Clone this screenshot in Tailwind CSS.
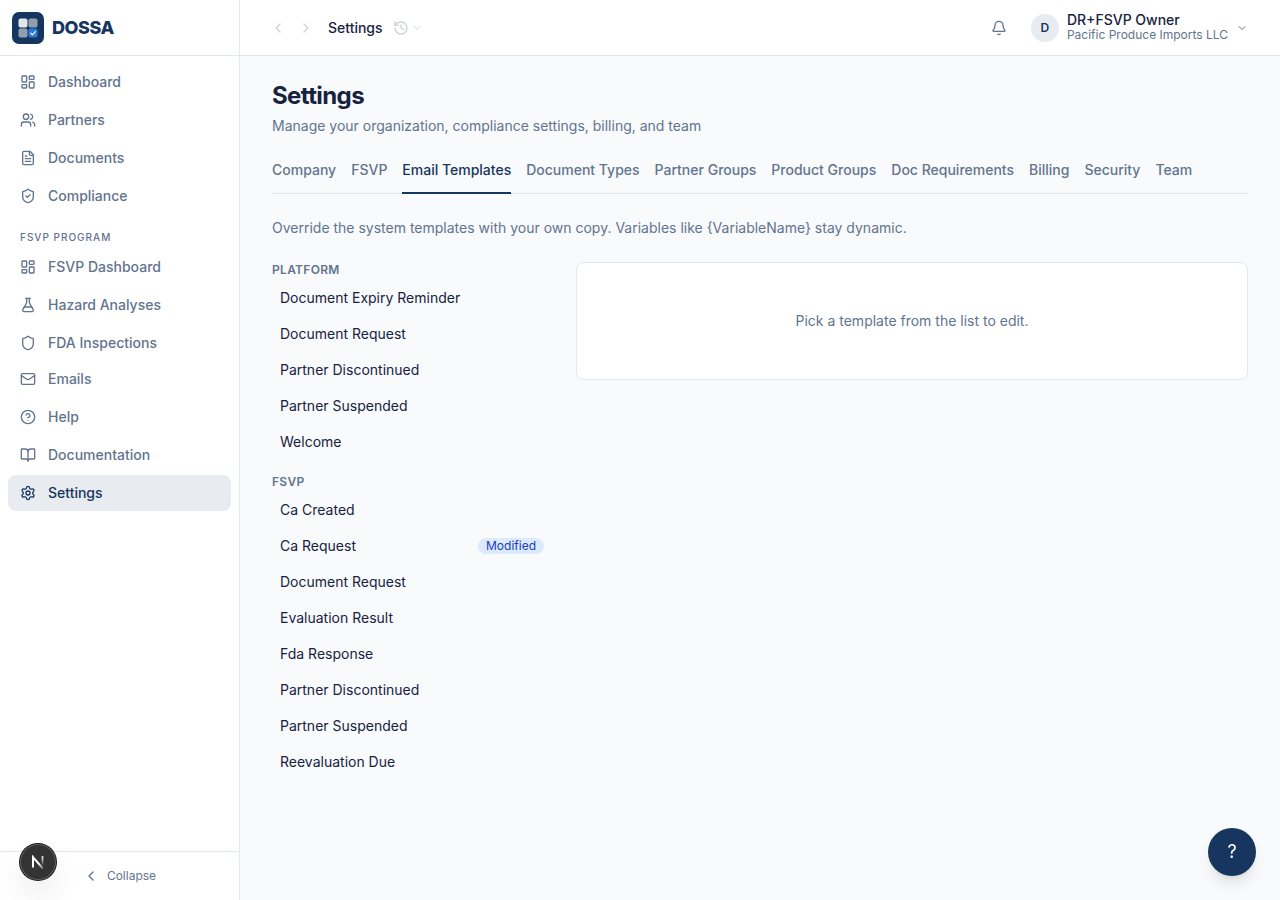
<!DOCTYPE html>
<html lang="en">
<head>
    <meta charset="UTF-8">
    <meta name="viewport" content="width=device-width, initial-scale=1.0">
    <title>Settings - DOSSA</title>
    <script src="https://cdn.jsdelivr.net/npm/@tailwindcss/browser@4"></script>
</head>
<body class="bg-[#f8fafc] font-['Inter',sans-serif] text-sm text-[#172242] antialiased">

    <!-- Icons -->
    <svg class="hidden" fill="none">
        <symbol id="dashboard" viewBox="0 0 24 24"><rect width="7" height="9" x="3" y="3" rx="1"/><rect width="7" height="5" x="14" y="3" rx="1"/><rect width="7" height="9" x="14" y="12" rx="1"/><rect width="7" height="5" x="3" y="16" rx="1"/></symbol>
        <symbol id="users" viewBox="0 0 24 24"><path d="M16 21v-2a4 4 0 0 0-4-4H6a4 4 0 0 0-4 4v2"/><circle cx="9" cy="7" r="4"/><path d="M22 21v-2a4 4 0 0 0-3-3.87"/><path d="M16 3.13a4 4 0 0 1 0 7.75"/></symbol>
        <symbol id="file" viewBox="0 0 24 24"><path d="M15 2H6a2 2 0 0 0-2 2v16a2 2 0 0 0 2 2h12a2 2 0 0 0 2-2V7Z"/><path d="M14 2v4a2 2 0 0 0 2 2h4"/><path d="M10 9H8"/><path d="M16 13H8"/><path d="M16 17H8"/></symbol>
        <symbol id="shield" viewBox="0 0 24 24"><path d="M20 13c0 5-3.5 7.5-7.66 8.95a1 1 0 0 1-.67-.01C7.5 20.5 4 18 4 13V6a1 1 0 0 1 1-1c2 0 4.5-1.2 6.24-2.72a1.17 1.17 0 0 1 1.52 0C14.51 3.81 17 5 19 5a1 1 0 0 1 1 1z"/></symbol>
        <symbol id="shield-check" viewBox="0 0 24 24"><path d="M20 13c0 5-3.5 7.5-7.66 8.95a1 1 0 0 1-.67-.01C7.5 20.5 4 18 4 13V6a1 1 0 0 1 1-1c2 0 4.5-1.2 6.24-2.72a1.17 1.17 0 0 1 1.52 0C14.51 3.81 17 5 19 5a1 1 0 0 1 1 1z"/><path d="m9 12 2 2 4-4"/></symbol>
        <symbol id="flask" viewBox="0 0 24 24"><path d="M14 2v6a2 2 0 0 0 .245.96l5.51 10.08A2 2 0 0 1 18 22H6a2 2 0 0 1-1.755-2.96l5.51-10.08A2 2 0 0 0 10 8V2"/><path d="M6.453 15h11.094"/><path d="M8.5 2h7"/></symbol>
        <symbol id="mail" viewBox="0 0 24 24"><rect width="20" height="16" x="2" y="4" rx="2"/><path d="m22 7-8.97 5.7a1.94 1.94 0 0 1-2.06 0L2 7"/></symbol>
        <symbol id="help" viewBox="0 0 24 24"><circle cx="12" cy="12" r="10"/><path d="M9.09 9a3 3 0 0 1 5.83 1c0 2-3 3-3 3"/><path d="M12 17h.01"/></symbol>
        <symbol id="book" viewBox="0 0 24 24"><path d="M12 7v14"/><path d="M3 18a1 1 0 0 1-1-1V4a1 1 0 0 1 1-1h5a4 4 0 0 1 4 4 4 4 0 0 1 4-4h5a1 1 0 0 1 1 1v13a1 1 0 0 1-1 1h-6a3 3 0 0 0-3 3 3 3 0 0 0-3-3z"/></symbol>
        <symbol id="settings" viewBox="0 0 24 24"><path d="M9.671 4.136a2.34 2.34 0 0 1 4.659 0 2.34 2.34 0 0 0 3.319 1.915 2.34 2.34 0 0 1 2.33 4.033 2.34 2.34 0 0 0 0 3.831 2.34 2.34 0 0 1-2.33 4.033 2.34 2.34 0 0 0-3.319 1.915 2.34 2.34 0 0 1-4.659 0 2.34 2.34 0 0 0-3.32-1.915 2.34 2.34 0 0 1-2.33-4.033 2.34 2.34 0 0 0 0-3.831A2.34 2.34 0 0 1 6.35 6.051a2.34 2.34 0 0 0 3.319-1.915"/><circle cx="12" cy="12" r="3"/></symbol>
        <symbol id="history" viewBox="0 0 24 24"><path d="M3 12a9 9 0 1 0 9-9 9.75 9.75 0 0 0-6.74 2.74L3 8"/><path d="M3 3v5h5"/><path d="M12 7v5l4 2"/></symbol>
        <symbol id="bell" viewBox="0 0 24 24"><path d="M10.268 21a2 2 0 0 0 3.464 0"/><path d="M3.262 15.326A1 1 0 0 0 4 17h16a1 1 0 0 0 .74-1.673C19.41 13.956 18 12.499 18 8A6 6 0 0 0 6 8c0 4.499-1.411 5.956-2.738 7.326"/></symbol>
        <symbol id="left" viewBox="0 0 24 24"><path d="m15 18-6-6 6-6"/></symbol>
        <symbol id="right" viewBox="0 0 24 24"><path d="m9 18 6-6-6-6"/></symbol>
        <symbol id="down" viewBox="0 0 24 24"><path d="m6 9 6 6 6-6"/></symbol>
    </svg>

    <div class="flex min-h-screen">
        <!-- Sidebar -->
        <aside class="sticky top-0 flex h-screen w-60 shrink-0 flex-col border-r border-slate-200 bg-white">
            <a href="#" class="flex h-14 shrink-0 items-center gap-2 border-b border-slate-200 px-3">
                <svg class="size-8" viewBox="0 0 32 32">
                    <rect width="32" height="32" rx="7" fill="#16365f"/>
                    <rect x="6.5" y="6.5" width="9" height="9" rx="2" fill="#e1e5eb"/>
                    <rect x="16.5" y="6.5" width="9" height="9" rx="2" fill="#919fb3"/>
                    <rect x="6.5" y="16.5" width="9" height="9" rx="2" fill="#919fb3"/>
                    <rect x="16.5" y="16.5" width="9" height="9" rx="2" fill="#2a7ad8"/>
                    <path d="m18.8 21.2 1.6 1.6 3-3.2" fill="none" stroke="#fff" stroke-width="1.2" stroke-linecap="round" stroke-linejoin="round"/>
                </svg>
                <span class="text-lg font-extrabold tracking-tight text-[#16365f]">DOSSA</span>
            </a>

            <nav class="flex flex-1 flex-col gap-0.5 overflow-y-auto p-2 font-medium text-slate-500">
                <a href="#" class="flex h-9 items-center gap-3 rounded-lg px-3 hover:bg-slate-100"><svg class="size-4 fill-none stroke-current stroke-2 [stroke-linecap:round] [stroke-linejoin:round]"><use href="#dashboard"/></svg>Dashboard</a>
                <a href="#" class="flex h-9 items-center gap-3 rounded-lg px-3 hover:bg-slate-100"><svg class="size-4 fill-none stroke-current stroke-2 [stroke-linecap:round] [stroke-linejoin:round]"><use href="#users"/></svg>Partners</a>
                <a href="#" class="flex h-9 items-center gap-3 rounded-lg px-3 hover:bg-slate-100"><svg class="size-4 fill-none stroke-current stroke-2 [stroke-linecap:round] [stroke-linejoin:round]"><use href="#file"/></svg>Documents</a>
                <a href="#" class="flex h-9 items-center gap-3 rounded-lg px-3 hover:bg-slate-100"><svg class="size-4 fill-none stroke-current stroke-2 [stroke-linecap:round] [stroke-linejoin:round]"><use href="#shield-check"/></svg>Compliance</a>
                <div>
                    <p class="px-3 pt-3.5 pb-1 text-[10px] leading-[15px] font-medium tracking-widest uppercase">FSVP Program</p>
                    <div class="flex flex-col gap-0.5">
                        <a href="#" class="flex h-9 items-center gap-3 rounded-lg px-3 hover:bg-slate-100"><svg class="size-4 fill-none stroke-current stroke-2 [stroke-linecap:round] [stroke-linejoin:round]"><use href="#dashboard"/></svg>FSVP Dashboard</a>
                        <a href="#" class="flex h-9 items-center gap-3 rounded-lg px-3 hover:bg-slate-100"><svg class="size-4 fill-none stroke-current stroke-2 [stroke-linecap:round] [stroke-linejoin:round]"><use href="#flask"/></svg>Hazard Analyses</a>
                        <a href="#" class="flex h-9 items-center gap-3 rounded-lg px-3 hover:bg-slate-100"><svg class="size-4 fill-none stroke-current stroke-2 [stroke-linecap:round] [stroke-linejoin:round]"><use href="#shield"/></svg>FDA Inspections</a>
                    </div>
                    <a href="#" class="flex h-9 items-center gap-3 rounded-lg px-3 hover:bg-slate-100"><svg class="size-4 fill-none stroke-current stroke-2 [stroke-linecap:round] [stroke-linejoin:round]"><use href="#mail"/></svg>Emails</a>
                </div>
                <a href="#" class="flex h-9 items-center gap-3 rounded-lg px-3 hover:bg-slate-100"><svg class="size-4 fill-none stroke-current stroke-2 [stroke-linecap:round] [stroke-linejoin:round]"><use href="#help"/></svg>Help</a>
                <a href="#" class="flex h-9 items-center gap-3 rounded-lg px-3 hover:bg-slate-100"><svg class="size-4 fill-none stroke-current stroke-2 [stroke-linecap:round] [stroke-linejoin:round]"><use href="#book"/></svg>Documentation</a>
                <a href="#" class="flex h-9 items-center gap-3 rounded-lg bg-[#e8ebef] px-3 text-[#16365f]"><svg class="size-4 fill-none stroke-current stroke-2 [stroke-linecap:round] [stroke-linejoin:round]"><use href="#settings"/></svg>Settings</a>
            </nav>

            <div class="border-t border-slate-200 p-2">
                <button class="flex h-8 w-full items-center justify-center gap-2 rounded-md text-xs text-slate-500 hover:bg-slate-100"><svg class="size-4 fill-none stroke-current stroke-2 [stroke-linecap:round] [stroke-linejoin:round]"><use href="#left"/></svg>Collapse</button>
            </div>
        </aside>

        <div class="flex min-w-0 flex-1 flex-col">
            <!-- Top bar -->
            <header class="flex h-14 shrink-0 items-center justify-between border-b border-slate-200 bg-white px-6">
                <div class="flex items-center">
                    <button aria-label="Back" disabled class="flex size-7 items-center justify-center text-slate-500 opacity-30"><svg class="size-4 fill-none stroke-current stroke-2 [stroke-linecap:round] [stroke-linejoin:round]"><use href="#left"/></svg></button>
                    <button aria-label="Forward" disabled class="flex size-7 items-center justify-center text-slate-500 opacity-30"><svg class="size-4 fill-none stroke-current stroke-2 [stroke-linecap:round] [stroke-linejoin:round]"><use href="#right"/></svg></button>
                    <span class="ml-2 font-medium">Settings</span>
                    <button aria-label="History" disabled class="ml-2.5 flex items-center gap-0.5 text-slate-500 opacity-30"><svg class="size-4 fill-none stroke-current stroke-2 [stroke-linecap:round] [stroke-linejoin:round]"><use href="#history"/></svg><svg class="size-3 fill-none stroke-current stroke-2 [stroke-linecap:round] [stroke-linejoin:round]"><use href="#down"/></svg></button>
                </div>
                <div class="flex items-center gap-2">
                    <button aria-label="Notifications" class="flex size-8 items-center justify-center text-slate-500"><svg class="size-4 fill-none stroke-current stroke-2 [stroke-linecap:round] [stroke-linejoin:round]"><use href="#bell"/></svg></button>
                    <button class="flex items-center gap-2 rounded-md px-2 text-left">
                        <span class="flex size-7 items-center justify-center rounded-full bg-[#e8ebef] text-xs font-semibold text-[#16365f]">D</span>
                        <span class="flex flex-col">
                            <span class="leading-3.5 font-medium">DR+FSVP Owner</span>
                            <span class="text-xs leading-4 text-slate-500">Pacific Produce Imports LLC</span>
                        </span>
                        <svg class="size-3 fill-none stroke-slate-500 stroke-2 [stroke-linecap:round] [stroke-linejoin:round]"><use href="#down"/></svg>
                    </button>
                </div>
            </header>

            <main class="flex-1 px-8 py-6">
                <h1 class="text-2xl font-bold tracking-tight">Settings</h1>
                <p class="mt-1 text-slate-500">Manage your organization, compliance settings, billing, and team</p>

                <nav class="mt-6 flex gap-[15px] border-b border-slate-200 font-medium whitespace-nowrap text-slate-500">
                    <a href="#" class="-mb-px border-b-2 border-transparent pb-3">Company</a>
                    <a href="#" class="-mb-px border-b-2 border-transparent pb-3">FSVP</a>
                    <a href="#" class="-mb-px border-b-2 border-[#16365f] pb-3 text-[#16365f]">Email Templates</a>
                    <a href="#" class="-mb-px border-b-2 border-transparent pb-3">Document Types</a>
                    <a href="#" class="-mb-px border-b-2 border-transparent pb-3">Partner Groups</a>
                    <a href="#" class="-mb-px border-b-2 border-transparent pb-3">Product Groups</a>
                    <a href="#" class="-mb-px border-b-2 border-transparent pb-3">Doc Requirements</a>
                    <a href="#" class="-mb-px border-b-2 border-transparent pb-3">Billing</a>
                    <a href="#" class="-mb-px border-b-2 border-transparent pb-3">Security</a>
                    <a href="#" class="-mb-px border-b-2 border-transparent pb-3">Team</a>
                </nav>

                <p class="mt-6 text-slate-500">Override the system templates with your own copy. Variables like {VariableName} stay dynamic.</p>

                <div class="mt-6 grid grid-cols-[280px_1fr] items-start gap-6">
                    <div class="flex flex-col gap-4">
                        <section>
                            <h2 class="text-xs font-semibold tracking-wide text-slate-500 uppercase">Platform</h2>
                            <div class="mt-1 flex flex-col gap-1">
                                <button class="rounded-md px-2 py-1.5 text-left hover:bg-slate-100">Document Expiry Reminder</button>
                                <button class="rounded-md px-2 py-1.5 text-left hover:bg-slate-100">Document Request</button>
                                <button class="rounded-md px-2 py-1.5 text-left hover:bg-slate-100">Partner Discontinued</button>
                                <button class="rounded-md px-2 py-1.5 text-left hover:bg-slate-100">Partner Suspended</button>
                                <button class="rounded-md px-2 py-1.5 text-left hover:bg-slate-100">Welcome</button>
                            </div>
                        </section>
                        <section>
                            <h2 class="text-xs font-semibold tracking-wide text-slate-500 uppercase">FSVP</h2>
                            <div class="mt-1 flex flex-col gap-1">
                                <button class="rounded-md px-2 py-1.5 text-left hover:bg-slate-100">Ca Created</button>
                                <button class="flex items-center justify-between rounded-md px-2 py-1.5 text-left hover:bg-slate-100">Ca Request <span class="rounded-full bg-blue-100 px-2 text-xs text-blue-800">Modified</span></button>
                                <button class="rounded-md px-2 py-1.5 text-left hover:bg-slate-100">Document Request</button>
                                <button class="rounded-md px-2 py-1.5 text-left hover:bg-slate-100">Evaluation Result</button>
                                <button class="rounded-md px-2 py-1.5 text-left hover:bg-slate-100">Fda Response</button>
                                <button class="rounded-md px-2 py-1.5 text-left hover:bg-slate-100">Partner Discontinued</button>
                                <button class="rounded-md px-2 py-1.5 text-left hover:bg-slate-100">Partner Suspended</button>
                                <button class="rounded-md px-2 py-1.5 text-left hover:bg-slate-100">Reevaluation Due</button>
                            </div>
                        </section>
                    </div>

                    <div class="rounded-lg border border-slate-200 bg-white p-12 text-center text-slate-500">
                        Pick a template from the list to edit.
                    </div>
                </div>
            </main>
        </div>
    </div>

    <!-- Dev tools badge -->
    <button aria-label="Open dev tools" class="fixed bottom-5 left-5 flex size-9 items-center justify-center rounded-full bg-[#333] shadow-[0_0_0_1px_#171717,inset_0_0_0_1px_#5c5c5c,0_16px_32px_-8px_rgba(0,0,0,0.24)]">
        <svg class="size-3.5" viewBox="0 0 14 14" fill="none">
            <defs>
                <linearGradient id="stem" x1="0" y1="1" x2="0" y2="11" gradientUnits="userSpaceOnUse"><stop stop-color="#fff"/><stop offset="1" stop-color="#fff" stop-opacity="0"/></linearGradient>
                <linearGradient id="diag" x1="8" y1="8" x2="13" y2="14" gradientUnits="userSpaceOnUse"><stop stop-color="#fff"/><stop offset="1" stop-color="#fff" stop-opacity="0.2"/></linearGradient>
            </defs>
            <path d="M2 12.5V2.2L11.8 13.5" stroke="url(#diag)" stroke-width="2"/>
            <path d="M11.5 1.2V10" stroke="url(#stem)" stroke-width="1.8"/>
        </svg>
    </button>

    <button aria-label="Get help" class="fixed right-6 bottom-6 size-12 rounded-full bg-[#16365f] text-lg text-white shadow-lg">?</button>

</body>
</html>
